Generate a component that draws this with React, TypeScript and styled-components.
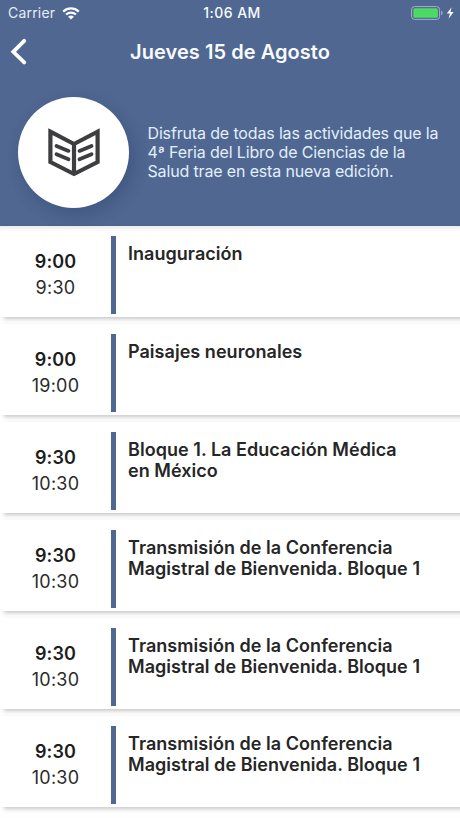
import React from 'react';
import styled, { createGlobalStyle } from 'styled-components';

const BLUE = '#4f6791';

const GlobalStyle = createGlobalStyle`
  * { box-sizing: border-box; }
  body { margin: 0; background: #fff; font-family: Inter, 'Liberation Sans', sans-serif; }
`;

const Screen = styled.main`
  width: 460px;
  height: 818px;
  overflow: hidden;
  background: #fefefe;
`;

const Header = styled.header`
  height: 226px;
  background: ${BLUE};
  color: #f8fbff;
`;

const StatusBar = styled.div`
  display: grid;
  grid-template-columns: 1fr auto 1fr;
  align-items: center;
  height: 26px;
  padding: 0 5px 0 8px;
  font-size: 14px;
  line-height: 26px;
`;

const Carrier = styled.div`
  display: flex;
  align-items: center;
  gap: 7px;
  letter-spacing: 0.2px;
  color: #e6edf8;
`;

const Clock = styled.div`
  padding-left: 1px;
  font-weight: 550;
  font-size: 14px;
  letter-spacing: 0.45px;
`;

const Power = styled.div`
  display: flex;
  justify-content: flex-end;
  align-items: center;
`;

const NavBar = styled.nav`
  display: grid;
  grid-template-columns: 40px 1fr 40px;
  align-items: center;
  height: 52px;
`;

const BackButton = styled.button`
  display: flex;
  height: 52px;
  padding: 12px 0 0 10px;
  border: 0;
  background: none;
`;

const Title = styled.h1`
  margin: 0;
  font-size: 20px;
  font-weight: 600;
  line-height: 52px;
  letter-spacing: 0.05px;
  text-align: center;
  white-space: nowrap;
`;

const Intro = styled.section`
  display: flex;
  align-items: center;
  gap: 18.5px;
  padding: 19px 0 0 18px;
`;

const Emblem = styled.div`
  display: flex;
  align-items: center;
  justify-content: center;
  flex: none;
  width: 111px;
  height: 111px;
  border-radius: 50%;
  background: #fff;
  box-shadow: 4px 6px 16px rgba(20, 35, 70, 0.24);
`;

const Description = styled.p`
  margin: 0;
  font-size: 16px;
  line-height: 19px;
  letter-spacing: -0.15px;
  color: #e2effc;
  white-space: nowrap;
`;

const Schedule = styled.ul`
  display: flex;
  flex-direction: column;
  gap: 7px;
  margin: 0;
  padding: 0;
  list-style: none;
`;

const Card = styled.li`
  display: flex;
  height: 91px;
  padding: 10px 0 3px;
  background: #fff;
  box-shadow: 4px 2px 4px rgba(0, 0, 0, 0.22);

  &:first-child {
    background: linear-gradient(#e9e9ee, #fff 5px);
  }
`;

const Times = styled.div`
  flex: none;
  width: 110px;
  padding-top: 13px;
  text-align: center;
  font-size: 18px;
  line-height: 26px;
  color: #2b2b2b;
`;

const Start = styled.div`
  padding-left: 1px;
  font-weight: 600;
  letter-spacing: 0.1px;
  color: #1d1d1d;
`;

const End = styled.div`
  padding-left: 1px;
  font-weight: 400;
  letter-spacing: 0.25px;
`;

const Divider = styled.div`
  flex: none;
  width: 5px;
  height: 78px;
  margin: 0 12.5px 0 0.5px;
  background: ${BLUE};
`;

const EventTitle = styled.h2`
  margin: 0;
  padding-top: 7px;
  font-size: 18px;
  font-weight: 600;
  line-height: 21.3px;
  letter-spacing: 0.04px;
  color: #262626;
  white-space: pre-line;
`;

const lecture = 'Transmisión de la Conferencia\nMagistral de Bienvenida. Bloque 1';

const events = [
  { start: '9:00', end: '9:30', title: 'Inauguración' },
  { start: '9:00', end: '19:00', title: 'Paisajes neuronales' },
  { start: '9:30', end: '10:30', title: 'Bloque 1. La Educación Médica\nen México' },
  { start: '9:30', end: '10:30', title: lecture },
  { start: '9:30', end: '10:30', title: lecture },
  { start: '9:30', end: '10:30', title: lecture },
];

const WifiIcon = () => (
  <svg width="18" height="13" viewBox="0 0 18 13" fill="none" stroke="#f8fbff">
    <path d="M1.2 4.6C5.6.4 12.4.4 16.8 4.6" strokeWidth="2.3" />
    <path d="M4 7.6c2.9-2.7 7.1-2.7 10 0" strokeWidth="2.1" />
    <path d="M9 12.5 6.1 9.7c1.7-1.5 4.1-1.5 5.8 0Z" fill="#f8fbff" stroke="none" />
  </svg>
);

const BatteryIcon = () => (
  <svg width="44" height="16" viewBox="0 0 44 16">
    <rect x="0.6" y="1.6" width="28" height="12.8" rx="3" fill="none" stroke="#a3b1cc" strokeWidth="1" />
    <rect x="2.3" y="3.3" width="24.6" height="9.4" rx="1.5" fill="#4cd964" />
    <path d="M30.2 5.8c1.9.6 1.9 3.8 0 4.4Z" fill="#a3b1cc" />
    <path d="M40.6 2.2 35.8 8.6h3.1l-1.3 5.1 5-6.7h-3.1Z" fill="#f8fbff" />
  </svg>
);

const BackIcon = () => (
  <svg width="18" height="27" viewBox="0 0 18 27" fill="none" stroke="#fff" strokeWidth="3.8" strokeLinecap="round" strokeLinejoin="miter">
    <path d="M14.2 2.8 3.3 13.8 14.2 24.4" />
  </svg>
);

const BookIcon = () => (
  <svg width="52" height="50" viewBox="0 0 52 50" fill="none" stroke="#3e3e40" strokeWidth="4.2">
    <path d="M2.4 3.7 26 16 49.6 3.7V34L26 46 2.4 34Z" />
    <path d="M26 16v30" />
    <path d="m8.5 18 12 4.9M8.5 26.3l12 4.9M43.5 18l-12 4.9M43.5 26.3l-12 4.9" strokeLinecap="round" strokeWidth="3.8" />
  </svg>
);

export default function App() {
  return (
    <>
      <GlobalStyle />
      <Screen>
        <Header>
          <StatusBar>
            <Carrier>Carrier <WifiIcon /></Carrier>
            <Clock>1:06 AM</Clock>
            <Power><BatteryIcon /></Power>
          </StatusBar>
          <NavBar>
            <BackButton aria-label="Volver"><BackIcon /></BackButton>
            <Title>Jueves 15 de Agosto</Title>
          </NavBar>
          <Intro>
            <Emblem><BookIcon /></Emblem>
            <Description>
              Disfruta de todas las actividades que la<br />
              4ª Feria del Libro de Ciencias de la<br />
              Salud trae en esta nueva edición.
            </Description>
          </Intro>
        </Header>
        <Schedule>
          {events.map((event, index) => (
            <Card key={index}>
              <Times>
                <Start>{event.start}</Start>
                <End>{event.end}</End>
              </Times>
              <Divider />
              <EventTitle>{event.title}</EventTitle>
            </Card>
          ))}
        </Schedule>
      </Screen>
    </>
  );
}
